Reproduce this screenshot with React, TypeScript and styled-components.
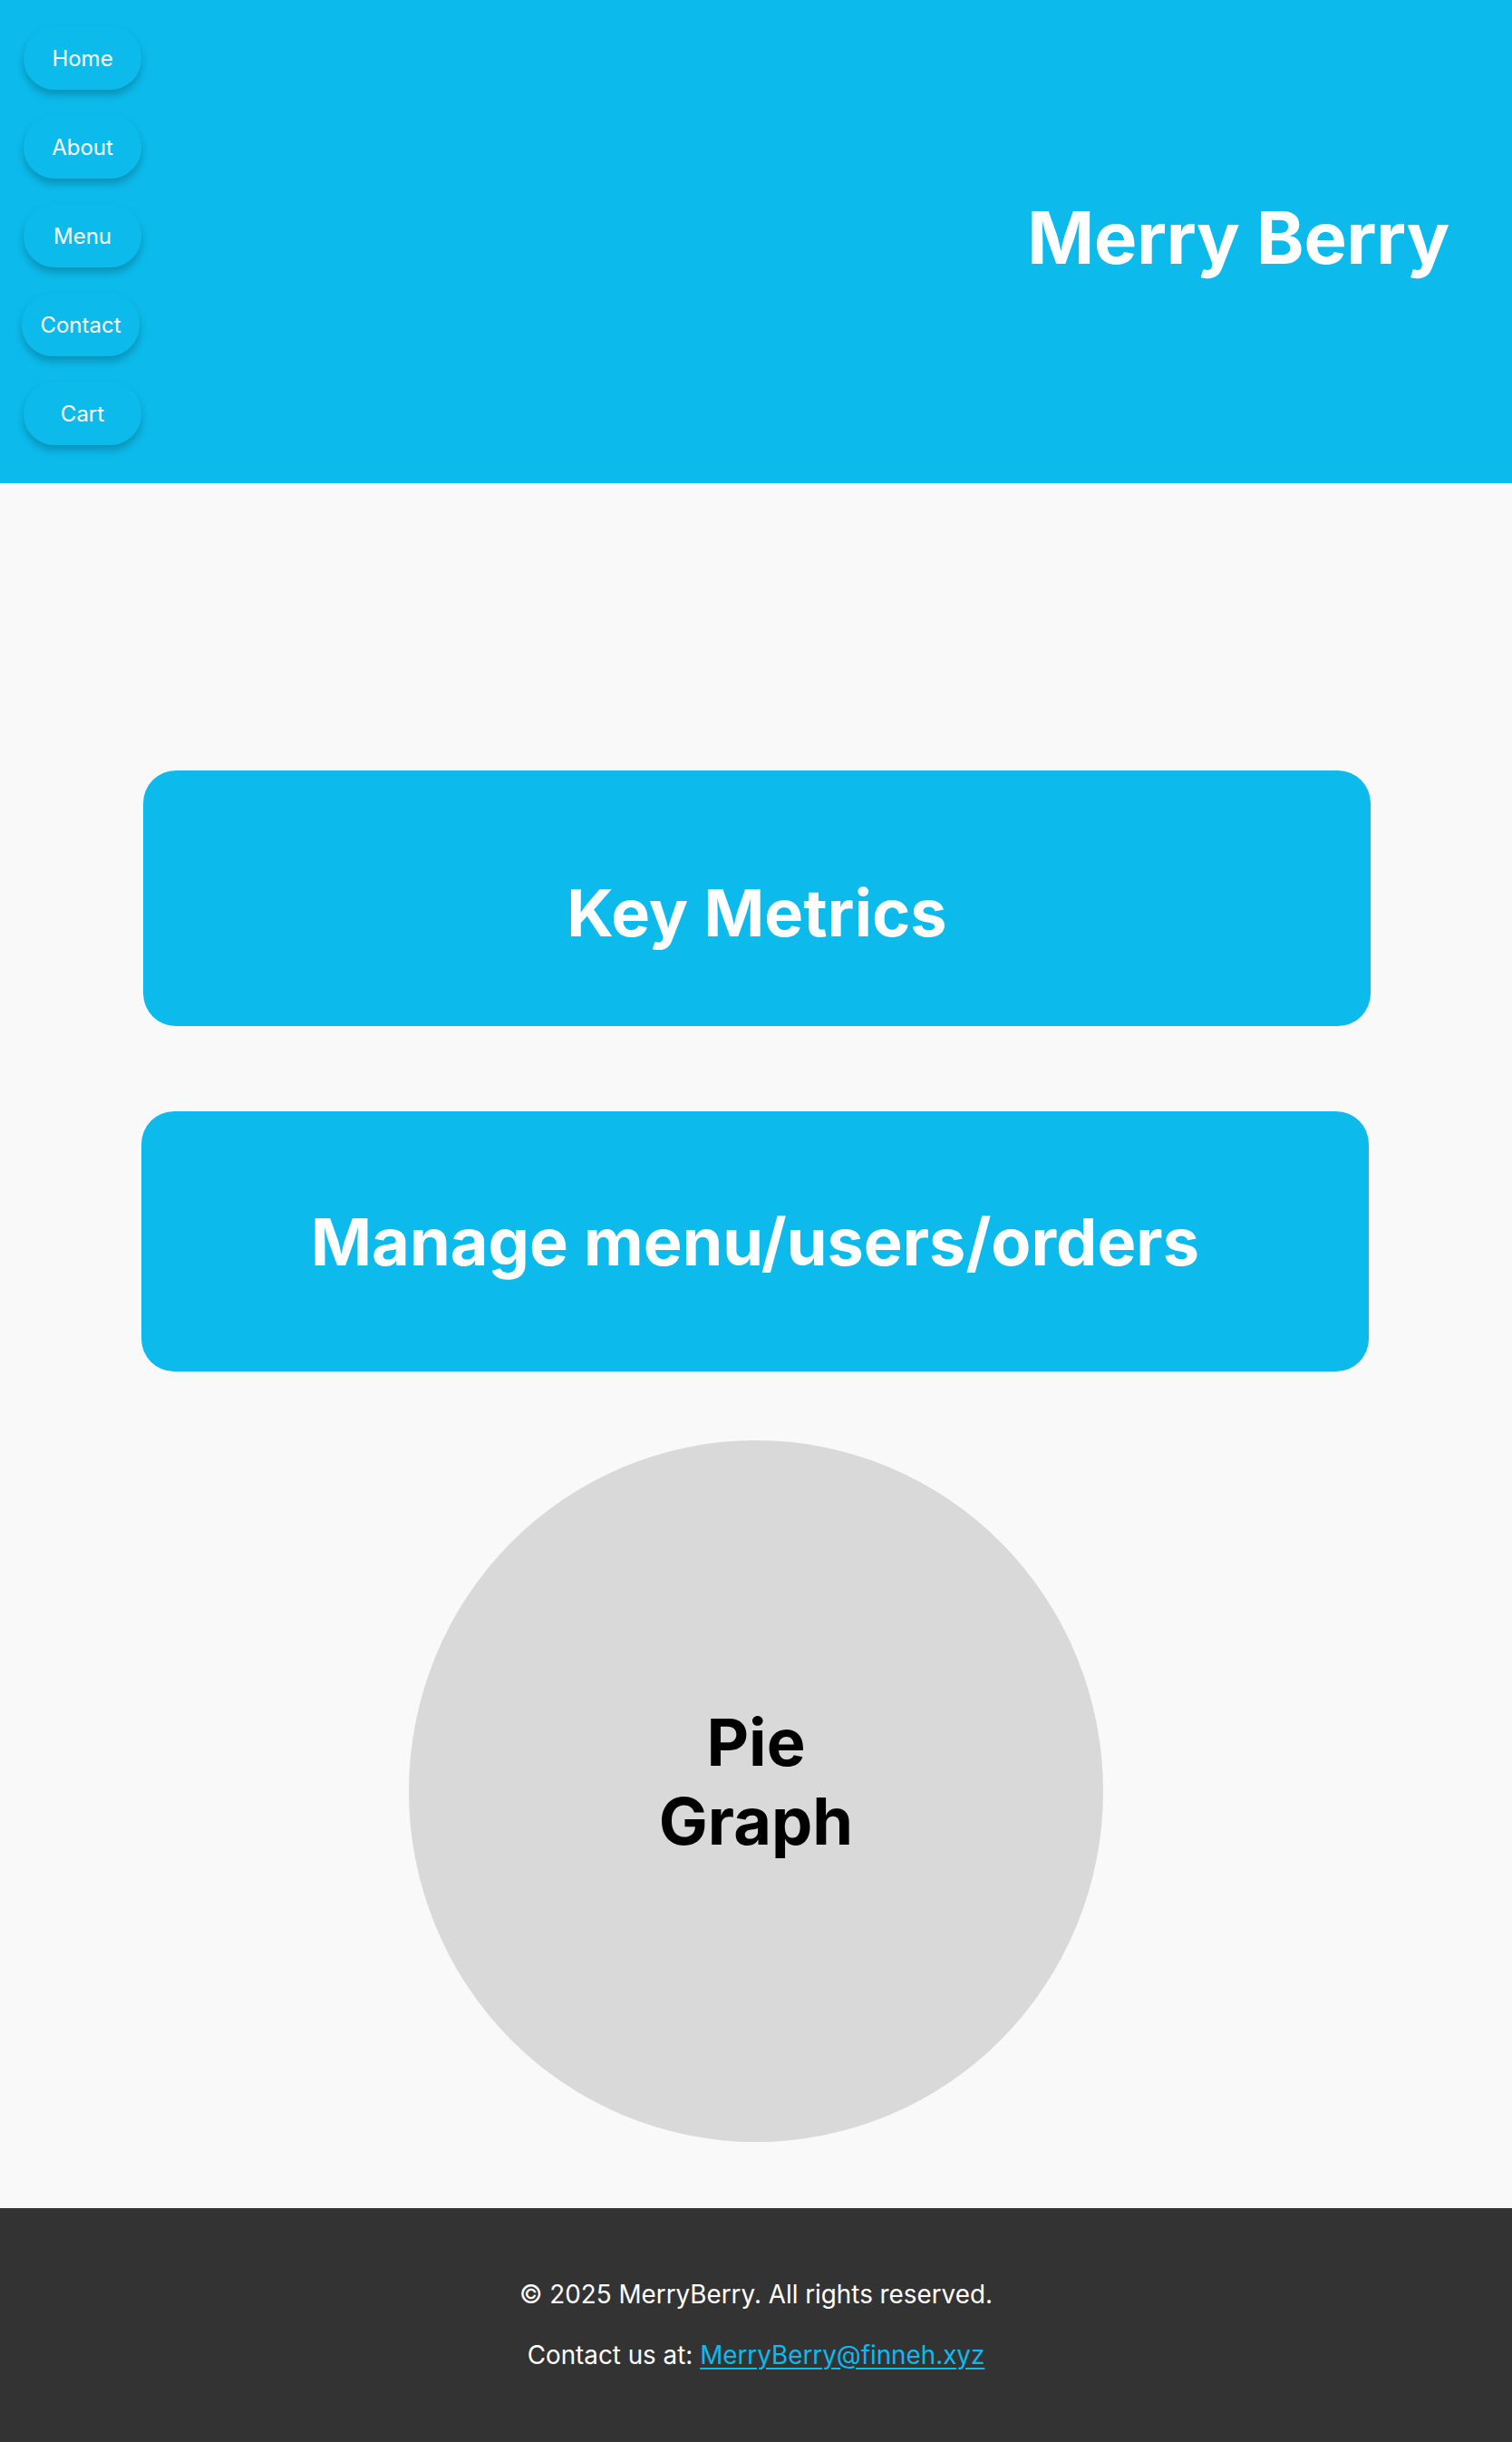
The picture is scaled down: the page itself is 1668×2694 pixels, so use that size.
import React from "react";
import styled, { createGlobalStyle } from "styled-components";

const BLUE = "#0cbbec";

const GlobalStyle = createGlobalStyle`
  html, body {
    margin: 0;
    padding: 0;
    background: #f9f9f9;
    font-family: Inter, "Noto Sans", "Liberation Sans", sans-serif;
  }
  * { box-sizing: border-box; }
`;

const Page = styled.div`
  display: flex;
  flex-direction: column;
  min-height: 2694px;
`;

const Header = styled.header`
  background: ${BLUE};
  height: 533px;
  display: flex;
  justify-content: space-between;
  align-items: center;
  padding: 29px 69px 41px 26px;
`;

const Nav = styled.nav`
  display: flex;
  flex-direction: column;
  gap: 28px;
  align-self: flex-start;
`;

const NavButton = styled.a<{ $nudge?: number }>`
  display: flex;
  align-items: center;
  justify-content: center;
  width: 130px;
  height: 70px;
  margin-left: ${(p) => p.$nudge ?? 0}px;
  border-radius: 34px;
  background: ${BLUE};
  color: #ffffff;
  font-size: 24px;
  font-weight: 400;
  text-decoration: none;
  box-shadow: 0 6px 10px rgba(0, 0, 0, 0.22);
  cursor: pointer;
`;

const Title = styled.h1`
  margin: 0;
  color: #ffffff;
  font-size: 79.5px;
  font-weight: 700;
  line-height: 1.21;
  letter-spacing: -0.3px;
  padding-top: 4px;
`;

const Main = styled.main`
  flex: 1;
  display: flex;
  flex-direction: column;
  align-items: center;
  padding: 317px 0 73px;
`;

const Card = styled.section<{ $top: number; $bottom: number; $shift: number; $gapAfter: number }>`
  width: 1354px;
  margin-left: ${(p) => p.$shift}px;
  margin-bottom: ${(p) => p.$gapAfter}px;
  background: ${BLUE};
  border-radius: 36px;
  padding: ${(p) => p.$top}px 20px ${(p) => p.$bottom}px;
  display: flex;
  justify-content: center;
`;

const CardTitle = styled.h2`
  margin: 0;
  color: #ffffff;
  font-size: 72px;
  font-weight: 700;
  line-height: 87px;
  text-align: center;
`;

const Pie = styled.div`
  width: 766px;
  height: 774px;
  border-radius: 50%;
  background: #d9d9d9;
  display: flex;
  align-items: center;
  justify-content: center;
  padding-bottom: 22px;
`;

const PieLabel = styled.h3`
  margin: 0;
  max-width: 260px;
  color: #000000;
  font-size: 72px;
  font-weight: 700;
  line-height: 87px;
  text-align: center;
`;

const Footer = styled.footer`
  background: #333333;
  height: 258px;
  display: flex;
  flex-direction: column;
  align-items: center;
  justify-content: center;
  gap: 26px;
  color: #ffffff;
  font-size: 27.8px;
`;

const FooterLine = styled.p`
  margin: 0;
  line-height: 41px;
`;

const MailLink = styled.a`
  color: ${BLUE};
  text-decoration: underline;
  text-underline-offset: 4px;
  text-decoration-thickness: 2px;
`;

const navItems: { label: string; nudge?: number }[] = [
  { label: "Home" },
  { label: "About" },
  { label: "Menu" },
  { label: "Contact", nudge: -2 },
  { label: "Cart" },
];

export default function App() {
  return (
    <>
      <GlobalStyle />
      <Page>
        <Header>
          <Nav>
            {navItems.map((n) => (
              <NavButton key={n.label} $nudge={n.nudge}>
                {n.label}
              </NavButton>
            ))}
          </Nav>
          <Title>Merry Berry</Title>
        </Header>
        <Main>
          <Card $top={113} $bottom={82} $shift={2} $gapAfter={94}>
            <CardTitle>Key Metrics</CardTitle>
          </Card>
          <Card $top={100} $bottom={100} $shift={-2} $gapAfter={76}>
            <CardTitle>Manage menu/users/orders</CardTitle>
          </Card>
          <Pie>
            <PieLabel>Pie Graph</PieLabel>
          </Pie>
        </Main>
        <Footer>
          <FooterLine>© 2025 MerryBerry. All rights reserved.</FooterLine>
          <FooterLine>
            Contact us at: <MailLink href="#">MerryBerry@finneh.xyz</MailLink>
          </FooterLine>
        </Footer>
      </Page>
    </>
  );
}
